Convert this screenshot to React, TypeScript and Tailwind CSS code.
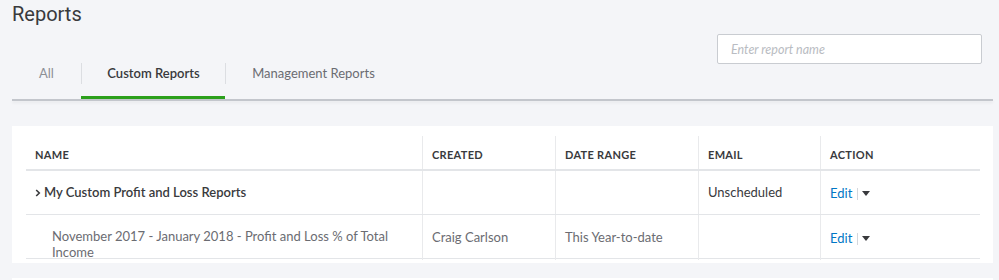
import React from "react";

const font = { fontFamily: "Lato, 'Noto Sans', sans-serif" };

function Caret() {
  return (
    <svg width="8" height="5" viewBox="0 0 8 5" className="ml-[4px]">
      <path d="M0 0 L8 0 L4 5 Z" fill="#393a3d" />
    </svg>
  );
}

function Chevron() {
  return (
    <svg width="6" height="8" viewBox="0 0 6 8" className="mr-[3px]">
      <path d="M1.2 1 L4.3 4 L1.2 7" fill="none" stroke="#393a3d" strokeWidth="1.6" />
    </svg>
  );
}

function Action() {
  return (
    <div className="flex items-center">
      <span className="text-[13px] text-[#0077c5]">Edit</span>
      <span className="ml-[5px] h-[12px] w-px bg-[#d4d7dc]" />
      <Caret />
    </div>
  );
}

export default function App() {
  const cols = "grid grid-cols-[396px_133px_143px_122px_160px]";
  const cell = "border-l border-[#e9eaec] pl-[9px]";
  return (
    <div
      className="w-[999px] h-[280px] overflow-hidden bg-[#f4f5f8] pl-[12px] pr-[6px] text-[#393a3d]"
      style={font}
    >
      <div className="h-[34px] pt-[1px]">
        <h1
          className="text-[20px] leading-[26px] text-[#393a3d]"
          style={{ fontFamily: "Roboto, 'Noto Sans', sans-serif" }}
        >
          Reports
        </h1>
      </div>

      <div className="flex justify-between">
        <div className="flex pt-[29px]">
          <div className="flex flex-col">
            <div className="h-[21px] w-[69px] flex items-center justify-center text-[13px] text-[#8d9096]">
              All
            </div>
            <div className="h-[15px]" />
          </div>
          <div className="flex flex-col">
            <div className="h-[21px] w-[144px] border-l border-[#dcdee2] flex items-center justify-center text-[13px] font-semibold text-[#393a3d]">
              Custom Reports
            </div>
            <div className="h-[12px]" />
            <div className="h-[3px] bg-[#2ca01c]" />
          </div>
          <div className="flex flex-col">
            <div className="h-[21px] w-[176px] border-l border-[#dcdee2] flex items-center justify-center text-[13px] text-[#6b6c72]">
              Management Reports
            </div>
            <div className="h-[15px]" />
          </div>
        </div>
        <div className="mr-[11px]">
          <input
            placeholder="Enter report name"
            className="w-[265px] h-[30px] bg-white border border-[#c9ccd1] rounded-[2px] px-[13px] text-[12.5px] italic outline-none placeholder:text-[#b9bcc2]"
            style={font}
          />
        </div>
      </div>
      <div className="h-[2px] bg-[#c3c6cc] shadow-[0_2px_3px_rgba(0,0,0,0.06)]" />

      <div className="mt-[25px] h-[137px] bg-white pt-[10px] pl-[14px] pr-[13px] overflow-hidden">
        <div className={`${cols} h-[35px] border-b-2 border-[#e3e5e8] text-[11px] font-bold tracking-[0.3px] text-[#393a3d]`}>
          <div className="pl-[9px] flex items-end pb-[6px]">NAME</div>
          <div className={`${cell} flex items-end pb-[6px]`}>CREATED</div>
          <div className={`${cell} flex items-end pb-[6px]`}>DATE RANGE</div>
          <div className={`${cell} flex items-end pb-[6px]`}>EMAIL</div>
          <div className={`${cell} flex items-end pb-[6px]`}>ACTION</div>
        </div>
        <div className={`${cols} h-[44px] border-b border-[#e3e5e8] text-[13px]`}>
          <div className="pl-[9px] flex items-center font-semibold text-[#393a3d]">
            <Chevron />
            My Custom Profit and Loss Reports
          </div>
          <div className={cell} />
          <div className={cell} />
          <div className={`${cell} flex items-center text-[#393a3d]`}>Unscheduled</div>
          <div className={`${cell} flex items-center pt-[2px]`}>
            <Action />
          </div>
        </div>
        <div className={`${cols} h-[44px] border-b border-[#e3e5e8] text-[13px] text-[#6b6c72]`}>
          <div className="pl-[26px] pr-[30px] pt-[14px] leading-[15.5px]">
            November 2017 - January 2018 - Profit and Loss % of Total Income
          </div>
          <div className={`${cell} flex items-center`}>Craig Carlson</div>
          <div className={`${cell} flex items-center`}>This Year-to-date</div>
          <div className={cell} />
          <div className={`${cell} flex items-center pt-[2px]`}>
            <Action />
          </div>
        </div>
      </div>

      <div className="mt-[15px] h-[40px] bg-white" />
    </div>
  );
}
